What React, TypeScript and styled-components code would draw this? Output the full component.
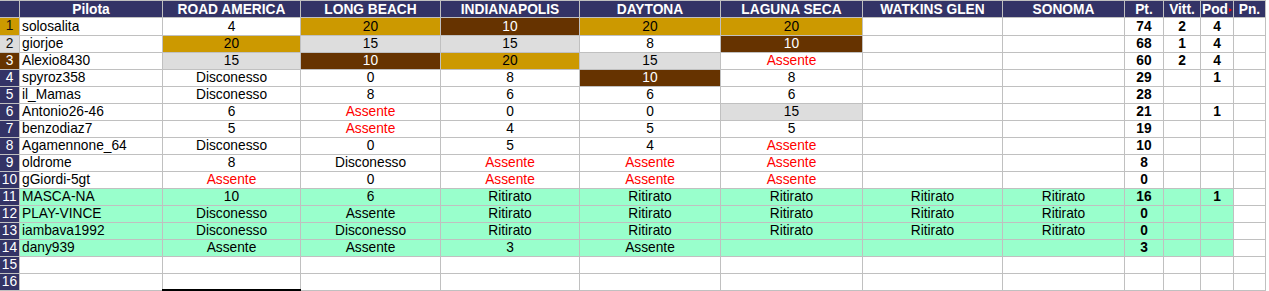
import React from "react";
import styled, { createGlobalStyle, css } from "styled-components";

const GlobalStyle = createGlobalStyle`
  html, body { margin: 0; padding: 0; background: #ffffff; }
  body { font-family: "Liberation Sans", Arial, sans-serif; }
`;

const NAVY = "#333366";
const GRID = "#c0c0c0";
const FILLS: Record<string, string> = {
  gold: "#cc9900",
  silver: "#dddddd",
  bronze: "#663300",
  green: "#99ffcc",
  white: "#ffffff",
};

const Sheet = styled.div`
  display: grid;
  grid-template-columns: 19px 142px 137px 139px 138px 140px 141px 139px 121px 38px 36px 32px 31px;
  grid-template-rows: 16px 17px repeat(15, 16px);
  gap: 1px;
  padding: 1px 1px 1px 0;
  width: max-content;
  background: ${GRID};
  font-family: "Liberation Sans", Arial, sans-serif;
  font-size: 13.75px;
`;

const Row = styled.div`
  display: contents;
`;

const HeaderCell = styled.div<{ $align?: "left" | "center" }>`
  position: relative;
  background: ${NAVY};
  color: #ffffff;
  font-weight: bold;
  line-height: 17px;
  text-align: ${(p) => p.$align ?? "center"};
  padding-left: ${(p) => (p.$align === "left" ? "1px" : "0")};
  white-space: nowrap;
  overflow: hidden;
`;

const CommentMark = styled.span`
  position: absolute;
  right: 1px;
  top: 7px;
  width: 0;
  height: 0;
  border-top: 2.5px solid transparent;
  border-bottom: 2.5px solid transparent;
  border-left: 3px solid #ff0000;
`;

const RowNum = styled.div<{ $medal?: string }>`
  background: ${(p) => (p.$medal ? FILLS[p.$medal] : NAVY)};
  color: ${(p) => (p.$medal === "gold" || p.$medal === "silver" ? "#111111" : "#ffffff")};
  text-align: center;
  line-height: 16px;
  white-space: nowrap;
  overflow: hidden;
`;

const Cell = styled.div<{
  $bg: string;
  $red?: boolean;
  $bold?: boolean;
  $left?: boolean;
  $light?: boolean;
  $tall?: boolean;
  $marked?: boolean;
}>`
  position: relative;
  background: ${(p) => p.$bg};
  color: ${(p) => (p.$red ? "#ff0000" : p.$light ? "#ffffff" : "#000000")};
  font-weight: ${(p) => (p.$bold ? "bold" : "normal")};
  text-align: ${(p) => (p.$left ? "left" : "center")};
  padding-left: ${(p) => (p.$left ? "2px" : "0")};
  line-height: ${(p) => (p.$tall ? "17px" : "16px")};
  white-space: nowrap;
  overflow: ${(p) => (p.$marked ? "visible" : "hidden")};
  ${(p) =>
    p.$marked &&
    css`
      &::after {
        content: "";
        position: absolute;
        left: -1px;
        right: -1px;
        bottom: -1px;
        height: 2px;
        background: #000000;
      }
    `}
`;

const HEADERS = [
  "ROAD AMERICA",
  "LONG BEACH",
  "INDIANAPOLIS",
  "DAYTONA",
  "LAGUNA SECA",
  "WATKINS GLEN",
  "SONOMA",
];

type Driver = {
  name: string;
  races: string[];
  pt?: string;
  vitt?: string;
  pod?: string;
  retired?: boolean;
};

const R7 = ["Ritirato", "Ritirato", "Ritirato", "Ritirato", "Ritirato"];

const DRIVERS: Driver[] = [
  { name: "solosalita", races: ["4", "G:20", "B:10", "G:20", "G:20", "", ""], pt: "74", vitt: "2", pod: "4" },
  { name: "giorjoe", races: ["G:20", "S:15", "S:15", "8", "B:10", "", ""], pt: "68", vitt: "1", pod: "4" },
  { name: "Alexio8430", races: ["S:15", "B:10", "G:20", "S:15", "R:Assente", "", ""], pt: "60", vitt: "2", pod: "4" },
  { name: "spyroz358", races: ["Disconesso", "0", "8", "B:10", "8", "", ""], pt: "29", pod: "1" },
  { name: "il_Mamas", races: ["Disconesso", "8", "6", "6", "6", "", ""], pt: "28" },
  { name: "Antonio26-46", races: ["6", "R:Assente", "0", "0", "S:15", "", ""], pt: "21", pod: "1" },
  { name: "benzodiaz7", races: ["5", "R:Assente", "4", "5", "5", "", ""], pt: "19" },
  { name: "Agamennone_64", races: ["Disconesso", "0", "5", "4", "R:Assente", "", ""], pt: "10" },
  { name: "oldrome", races: ["8", "Disconesso", "R:Assente", "R:Assente", "R:Assente", "", ""], pt: "8" },
  { name: "gGiordi-5gt", races: ["R:Assente", "0", "R:Assente", "R:Assente", "R:Assente", "", ""], pt: "0" },
  { name: "MASCA-NA", races: ["10", "6", ...R7], pt: "16", pod: "1", retired: true },
  { name: "PLAY-VINCE", races: ["Disconesso", "Assente", ...R7], pt: "0", retired: true },
  { name: "iambava1992", races: ["Disconesso", "Disconesso", ...R7], pt: "0", retired: true },
  { name: "dany939", races: ["Assente", "Assente", "3", "Assente", "", "", ""], pt: "3", retired: true },
];

const MEDALS: Record<number, string> = { 1: "gold", 2: "silver", 3: "bronze" };

function parse(raw: string, base: string) {
  const m = raw.match(/^([GSBR]):(.*)$/);
  if (!m) return { text: raw, bg: base, red: false, light: false };
  const [, code, text] = m;
  if (code === "R") return { text, bg: base, red: true, light: false };
  const key = code === "G" ? "gold" : code === "S" ? "silver" : "bronze";
  return { text, bg: FILLS[key], red: false, light: key === "bronze" };
}

export default function App() {
  const rows: (Driver | null)[] = [...DRIVERS, null, null];
  return (
    <>
      <GlobalStyle />
      <Sheet>
        <Row>
          <HeaderCell />
          <HeaderCell>Pilota</HeaderCell>
          {HEADERS.map((h) => (
            <HeaderCell key={h}>{h}</HeaderCell>
          ))}
          <HeaderCell>Pt.</HeaderCell>
          <HeaderCell>Vitt.</HeaderCell>
          <HeaderCell $align="left">
            Pod
            <CommentMark />
          </HeaderCell>
          <HeaderCell>Pn.</HeaderCell>
        </Row>
        {rows.map((d, i) => {
          const n = i + 1;
          const tall = n === 1;
          const base = d?.retired ? FILLS.green : FILLS.white;
          const races = d ? d.races : ["", "", "", "", "", "", ""];
          return (
            <Row key={n}>
              <RowNum $medal={MEDALS[n]}>{n}</RowNum>
              <Cell $bg={base} $left $tall={tall}>
                {d?.name ?? ""}
              </Cell>
              {races.map((r, j) => {
                const c = parse(r, base);
                return (
                  <Cell
                    key={j}
                    $bg={c.bg}
                    $red={c.red}
                    $light={c.light}
                    $tall={tall}
                    $marked={n === 16 && j === 0}
                  >
                    {c.text}
                  </Cell>
                );
              })}
              <Cell $bg={base} $bold $tall={tall}>
                {d?.pt ?? ""}
              </Cell>
              <Cell $bg={base} $bold $tall={tall}>
                {d?.vitt ?? ""}
              </Cell>
              <Cell $bg={base} $bold $tall={tall}>
                {d?.pod ?? ""}
              </Cell>
              <Cell $bg={FILLS.white} $bold $tall={tall} />
            </Row>
          );
        })}
      </Sheet>
    </>
  );
}
